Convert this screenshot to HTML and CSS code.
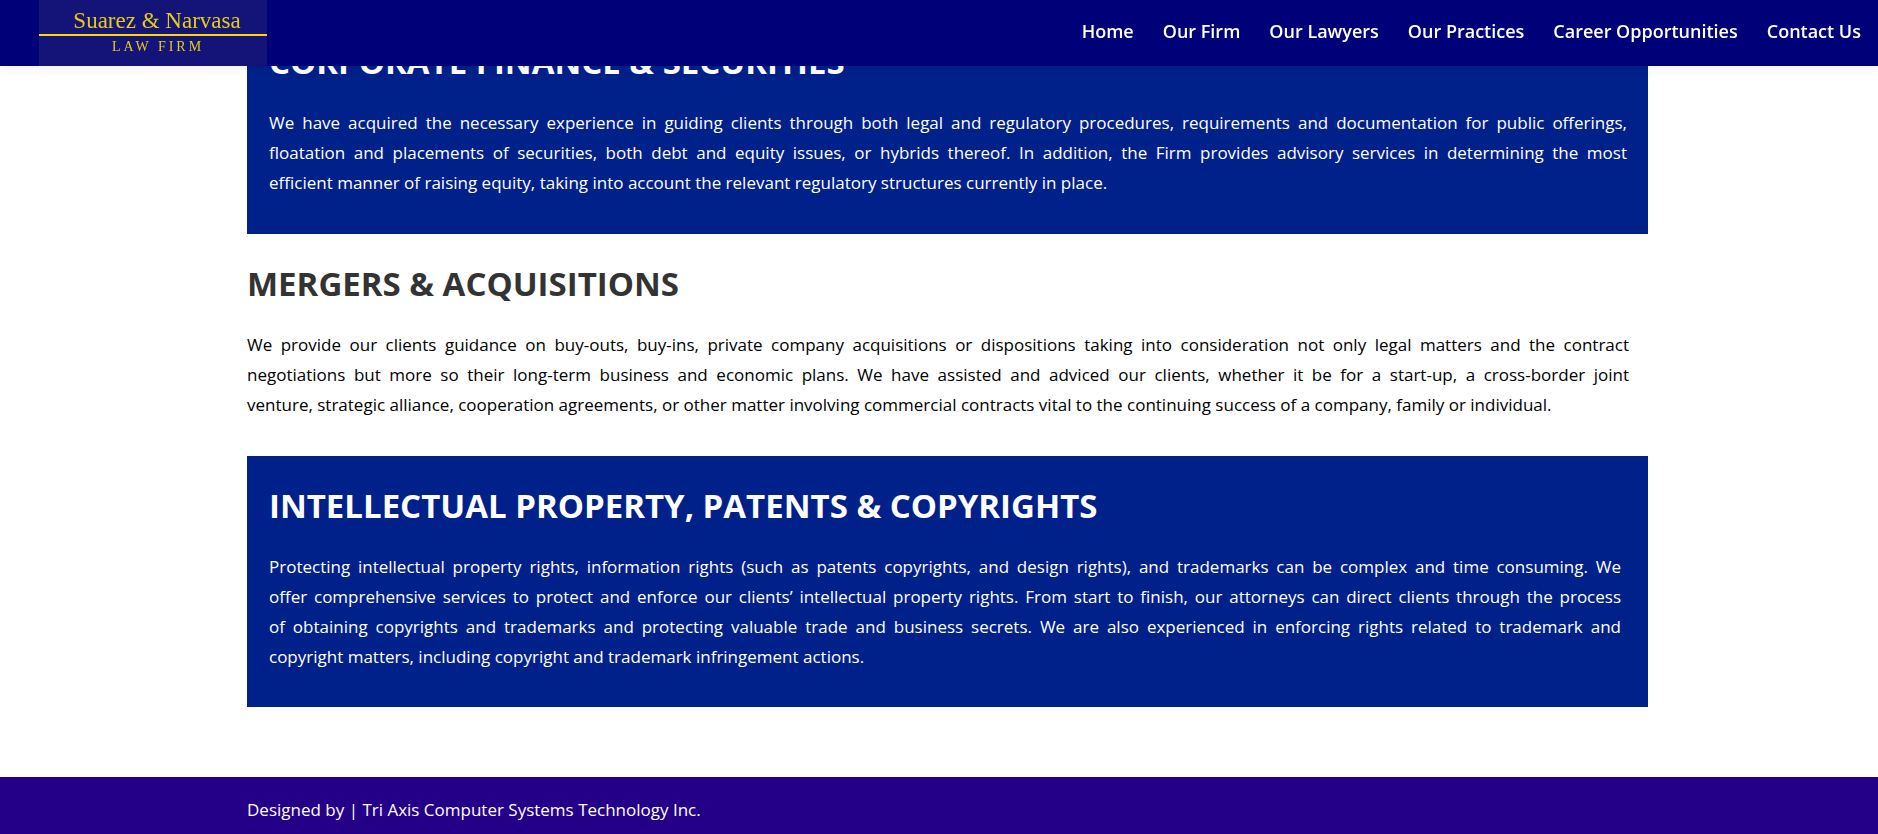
FILE: index.html
```html
<!DOCTYPE html>
<html lang="en">
<head>
    <meta charset="UTF-8">
    <meta name="viewport" content="width=device-width, initial-scale=1.0">
    <title>Our Practices | Suarez &amp; Narvasa Law Firm</title>
    <link rel="stylesheet" href="styles.css">
</head>
<body>
    <header class="site-header">
        <a class="logo" href="#">
            <span class="logo-name">Suarez &amp; Narvasa</span>
            <span class="logo-sub">LAW FIRM</span>
        </a>
        <nav class="main-nav">
            <a href="#">Home</a>
            <a href="#">Our Firm</a>
            <a href="#">Our Lawyers</a>
            <a href="#">Our Practices</a>
            <a href="#">Career Opportunities</a>
            <a href="#">Contact Us</a>
        </nav>
    </header>

    <main class="container">
        <section class="practice practice-blue">
            <h2>CORPORATE FINANCE &amp; SECURITIES</h2>
            <p>We have acquired the necessary experience in guiding clients through both legal and regulatory procedures, requirements and documentation for public offerings, floatation and placements of securities, both debt and equity issues, or hybrids thereof. In addition, the Firm provides advisory services in determining the most efficient&nbsp;manner of raising equity, taking into account the relevant regulatory structures currently in place.</p>
        </section>

        <section class="practice">
            <h2>MERGERS &amp; ACQUISITIONS</h2>
            <p>We provide our clients guidance on buy-outs, buy-ins, private company acquisitions or dispositions taking into consideration not only legal matters and the contract negotiations but more so their long-term business and economic plans. We have assisted and adviced our clients, whether it be for a start-up, a cross-border joint venture,&nbsp;strategic alliance, cooperation agreements, or other matter involving commercial contracts vital to the continuing success of a company, family or individual.</p>
        </section>

        <section class="practice practice-blue practice-ip">
            <h2>INTELLECTUAL PROPERTY, PATENTS &amp; COPYRIGHTS</h2>
            <p>Protecting intellectual property rights, information rights (such as patents copyrights, and design rights), and trademarks can be complex and time consuming. We offer&nbsp;comprehensive services to protect and enforce our clients’ intellectual property rights. From start to finish, our attorneys can direct clients through the process of&nbsp;obtaining copyrights and trademarks and protecting valuable trade and business secrets. We are also experienced in enforcing rights related to trademark and copyright&nbsp;matters, including copyright and trademark infringement actions.</p>
        </section>
    </main>

    <footer class="site-footer">
        <p>Designed by | Tri Axis Computer Systems Technology Inc.</p>
    </footer>
</body>
</html>
```
FILE: styles.css
```css
* {
    margin: 0;
    padding: 0;
    box-sizing: border-box;
}

body {
    display: flex;
    flex-direction: column;
    min-height: 100vh;
    font-family: "Open Sans", Arial, sans-serif;
    font-size: 17px;
    line-height: 30px;
    color: #000;
    background-color: #fff;
}

a {
    color: inherit;
    text-decoration: none;
}

/* Header */
.site-header {
    position: fixed;
    top: 0;
    left: 0;
    right: 0;
    z-index: 10;
    display: flex;
    justify-content: space-between;
    height: 66px;
    padding: 0 17px 0 39px;
    background-color: #000078;
    box-shadow: 0 2px 10px rgba(0, 0, 0, 0.07);
}

.logo {
    display: flex;
    flex-direction: column;
    width: 228px;
    padding-top: 8px;
    background-color: #141478;
    color: #e6cc14;
    font-family: "Liberation Serif", "Times New Roman", serif;
    text-align: center;
}

.logo-name {
    padding-left: 8px;
    border-bottom: 2px solid #ffd800;
    font-size: 23px;
    line-height: 26px;
}

.logo-sub {
    padding-left: 10px;
    font-size: 14px;
    line-height: 22px;
    letter-spacing: 3px;
}

.main-nav {
    display: flex;
    align-items: center;
    gap: 29px;
    padding-bottom: 5px;
    color: #fff;
    font-size: 18px;
    font-weight: 600;
}

/* Practice areas */
.container {
    width: 1401px;
    max-width: 75%;
    margin-left: 247px;
    padding: 12px 0 70px;
}

.practice {
    padding: 28px 19px 36px 0;
}

.practice h2 {
    margin-bottom: 24px;
    color: #333;
    font-size: 33px;
    line-height: 44px;
}

.practice p {
    text-align: justify;
}

.practice-blue {
    padding-left: 22px;
    padding-right: 21px;
    background-color: #00208a;
    color: #fff;
}

.practice-blue h2 {
    color: #fff;
}

.practice-ip {
    padding-right: 27px;
    padding-bottom: 35px;
}

/* Footer */
.site-footer {
    flex: 1;
    padding: 18px 247px 9px;
    background-color: #240088;
    color: #fff;
}
```
